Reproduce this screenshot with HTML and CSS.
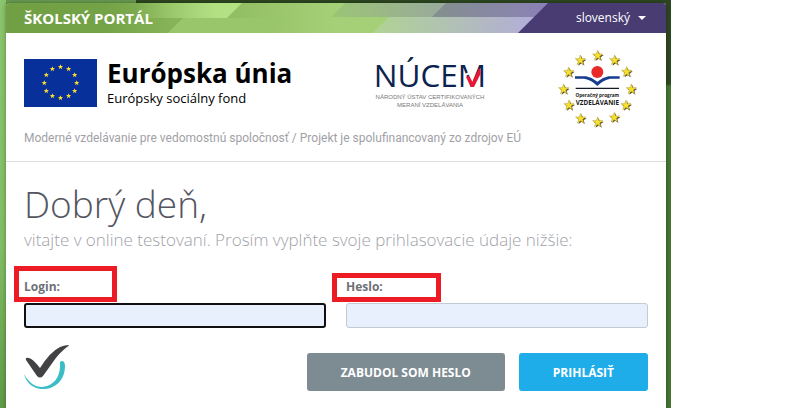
FILE: index.html
```html
<!DOCTYPE html>
<html lang="sk">
<head>
  <meta charset="UTF-8">
  <meta name="viewport" content="width=device-width, initial-scale=1.0">
  <title>Školský portál</title>
  <link rel="stylesheet" href="styles.css">
</head>
<body>
  <div class="page">
    <main class="panel">

      <!-- Top bar -->
      <header class="topbar">
        <svg class="topbar-art" viewBox="0 0 660 30" preserveAspectRatio="none" aria-hidden="true">
          <defs>
            <linearGradient id="base" gradientUnits="userSpaceOnUse" x1="0" y1="0" x2="330" y2="0">
              <stop offset="0" stop-color="#719f44"/>
              <stop offset=".3" stop-color="#74a247"/>
              <stop offset=".5" stop-color="#86b356"/>
              <stop offset="1" stop-color="#a6d078"/>
            </linearGradient>
            <linearGradient id="shine" gradientUnits="userSpaceOnUse" x1="130" y1="0" x2="210" y2="0">
              <stop offset="0" stop-color="#b2e083" stop-opacity="0"/>
              <stop offset="1" stop-color="#b2e083"/>
            </linearGradient>
            <linearGradient id="upper" gradientUnits="userSpaceOnUse" x1="320" y1="0" x2="545" y2="0">
              <stop offset="0" stop-color="#9bc673"/>
              <stop offset=".5" stop-color="#9aab9a"/>
              <stop offset="1" stop-color="#9186c0"/>
            </linearGradient>
            <linearGradient id="upper2" gradientUnits="userSpaceOnUse" x1="430" y1="0" x2="545" y2="0">
              <stop offset="0" stop-color="#838f8e"/>
              <stop offset="1" stop-color="#8b80b8"/>
            </linearGradient>
            <linearGradient id="lower" gradientUnits="userSpaceOnUse" x1="370" y1="0" x2="535" y2="0">
              <stop offset="0" stop-color="#afd394"/>
              <stop offset="1" stop-color="#b3abdc"/>
            </linearGradient>
          </defs>
          <rect width="660" height="30" fill="url(#base)"/>
          <path d="M130 0H236L221 15H130Z" fill="url(#shine)"/>
          <path d="M177 15H279L264 30H162Z" fill="#9ac66b"/>
          <path d="M339 0H560V14H325Z" fill="url(#upper)"/>
          <path d="M440 0H560V14H426Z" fill="url(#upper2)"/>
          <path d="M383 14H560V30H367Z" fill="url(#lower)"/>
          <path d="M542 0H660V30H512Z" fill="#483c73"/>
        </svg>
        <h1 class="portal-name">ŠKOLSKÝ PORTÁL</h1>
        <button class="language" type="button">slovenský <span class="caret"></span></button>
      </header>

      <!-- Partner logos -->
      <section class="partners">
        <div class="logos">
          <div class="eu">
            <svg class="eu-flag" viewBox="0 0 72 48" preserveAspectRatio="none" aria-hidden="true">
              <defs>
                <path id="star" d="M0-10 2.4-3.2 9.5-3.1 3.8 1.2 5.9 8.1 0 4-5.9 8.1-3.8 1.2-9.5-3.1-2.4-3.2Z"/>
                <g id="s"><use href="#star" transform="scale(.28)"/></g>
              </defs>
              <rect width="72" height="48" fill="#07309b"/>
              <g fill="#ffe02b">
                <use href="#s" x="36" y="8"/><use href="#s" x="44" y="10"/><use href="#s" x="50" y="16"/>
                <use href="#s" x="52" y="24"/><use href="#s" x="50" y="32"/><use href="#s" x="44" y="37"/>
                <use href="#s" x="36" y="39"/><use href="#s" x="28" y="37"/><use href="#s" x="22" y="32"/>
                <use href="#s" x="20" y="24"/><use href="#s" x="22" y="16"/><use href="#s" x="28" y="10"/>
              </g>
            </svg>
            <div>
              <p class="eu-title">Európska únia</p>
              <p class="eu-fund">Európsky sociálny fond</p>
            </div>
          </div>

          <svg class="nucem" viewBox="0 0 256 128" role="img" aria-label="NÚCEM">
            <text class="nucem-name" x="138" y="76">NÚCEM</text>
            <path d="M208 52 217 48" fill="none" stroke="#fff" stroke-width="4"/>
            <path d="M210 56 216 53 223 66 236 38 239 42V50L226 76H220Z" fill="#e8173a"/>
            <text class="nucem-sub" x="138" y="99">NÁRODNÝ ÚSTAV CERTIFIKOVANÝCH</text>
            <text class="nucem-sub" x="138" y="115">MERANÍ VZDELÁVANIA</text>
          </svg>

          <svg class="program" viewBox="0 0 240 240" role="img" aria-label="Operačný program Vzdelávanie">
            <defs>
              <g id="b">
                <use href="#star" transform="translate(3 3) scale(1.6)" fill="#55503a"/>
                <use href="#star" transform="scale(1.6)" fill="#f7e02e" stroke="#b39c2a" stroke-width="1"/>
              </g>
            </defs>
            <use href="#b" x="122" y="20"/><use href="#b" x="173" y="34"/><use href="#b" x="209" y="69"/>
            <use href="#b" x="223" y="121"/><use href="#b" x="207" y="169"/><use href="#b" x="172" y="206"/>
            <use href="#b" x="122" y="220"/><use href="#b" x="71" y="209"/><use href="#b" x="36" y="169"/>
            <use href="#b" x="20" y="121"/><use href="#b" x="35" y="70"/><use href="#b" x="70" y="34"/>
            <circle cx="121" cy="69" r="18" fill="#ea2a27"/>
            <path d="M54 82H87Q104 85 121 98Q138 85 155 82H188V89H160Q138 93 121 111Q104 93 82 89H54Z" fill="#173c8f"/>
            <path d="M56 116H186V120H56Z" fill="#151a24"/>
            <text class="program-small" x="121" y="143">Operačný program</text>
            <text class="program-big" x="121" y="169">VZDELÁVANIE</text>
          </svg>
        </div>
        <p class="tagline">Moderné vzdelávanie pre vedomostnú spoločnosť / Projekt je spolufinancovaný zo zdrojov EÚ</p>
      </section>

      <!-- Login -->
      <form class="login">
        <h2>Dobrý deň,</h2>
        <p class="intro">vitajte v online testovaní. Prosím vyplňte svoje prihlasovacie údaje nižšie:</p>

        <div class="fields">
          <div class="field">
            <label for="login">Login:</label>
            <input class="active" type="text" id="login" name="login">
            <span class="mark mark-login"></span>
          </div>
          <div class="field">
            <label for="heslo">Heslo:</label>
            <input type="password" id="heslo" name="heslo">
            <span class="mark mark-heslo"></span>
          </div>
        </div>

        <div class="actions">
          <svg class="check" viewBox="0 0 46 46" aria-hidden="true">
            <path d="M36 17C38 15 41 16 41 21C41 36 30 45 17 44C8 43 2 37 0 29C5 38 11 42 18 42C29 41 37 33 36 17Z" fill="#3abdc6"/>
            <path d="M2 15Q1 12 5 13Q8 13 16 23Q26 7 36 2Q41 0 45 0Q45 1 43 2Q35 8 29 17L19 31Q16 34 13 31Z" fill="#424143"/>
          </svg>
          <button class="btn btn-grey" type="button">ZABUDOL SOM HESLO</button>
          <button class="btn btn-blue" type="submit">PRIHLÁSIŤ</button>
        </div>
      </form>
    </main>
  </div>
</body>
</html>
```
FILE: styles.css
```css
/* ===== Reset ===== */
* {
  margin: 0;
  padding: 0;
  box-sizing: border-box;
}
body {
  background: #fff;
  font-family: "Open Sans", "Noto Sans", sans-serif;
  color: #6f7076;
}

/* ===== Page ===== */
.page {
  max-width: 671px;
  min-height: 100vh;
  padding: 3px 5px 0 6px;
  display: flex;
  background:
    linear-gradient(#8ac46d, #82bd64 60%, #5f9a46) 0 0 / 6px 100% no-repeat,
    linear-gradient(#6a9c50, #6a9c50) 0 0 / 136px 3px no-repeat,
    linear-gradient(#2d4720 0, #2d4a20 84px, #467634 86px, #467634 100%);
}
.panel {
  flex: 1;
  min-width: 0;
  background: #fff;
  border-radius: 3px 3px 0 0;
  box-shadow: 0 0 4px rgba(0,0,0,0.35);
}

/* ===== Top bar ===== */
.topbar {
  position: relative;
  display: flex;
  justify-content: space-between;
  align-items: center;
  height: 30px;
  padding: 0 20px 0 18px;
  border-radius: 3px 3px 0 0;
  overflow: hidden;
}
.topbar-art {
  position: absolute;
  inset: 0;
  width: 100%;
  height: 100%;
}
.portal-name {
  position: relative;
  font-size: 15px;
  line-height: 30px;
  color: #fff;
}
.language {
  position: relative;
  display: flex;
  align-items: center;
  gap: 8px;
  border: none;
  background: none;
  color: #fff;
  font: 12px/30px "Open Sans", sans-serif;
  cursor: pointer;
}
.caret {
  border: 4px solid transparent;
  border-top-color: #fff;
  border-bottom: none;
}

/* ===== Partner logos ===== */
.partners {
  padding: 16px 18px 14px;
  border-bottom: 1px solid #dcdcdc;
}
.logos {
  display: flex;
  justify-content: space-between;
  align-items: flex-start;
  padding-right: 11px;
}
.eu {
  display: flex;
  gap: 10px;
  padding-top: 10px;
  color: #000;
}
.eu-flag {
  width: 73px;
  height: 48px;
}
.eu-title {
  font-size: 26px;
  line-height: 28px;
  font-weight: bold;
}
.eu-fund {
  font-size: 13px;
  line-height: 22px;
}
.nucem {
  width: 128px;
  height: 64px;
}
.nucem-name {
  font-size: 63px;
  fill: #0c2350;
  text-anchor: middle;
}
.nucem-sub {
  font: 12px "Liberation Sans", sans-serif;
  fill: #777;
  text-anchor: middle;
}
.program {
  width: 80px;
  height: 80px;
}
.program-small,
.program-big {
  font: bold 14px "Open Sans", sans-serif;
  fill: #1b1b20;
  text-anchor: middle;
}
.program-big {
  font-size: 19px;
}
.tagline {
  font: 12px/18px Roboto, "Open Sans", sans-serif;
  color: #9fa1a6;
}

/* ===== Login ===== */
.login {
  padding: 18px;
}
.login h2 {
  font-size: 37px;
  line-height: 48px;
  font-weight: 300;
  color: #54555f;
}
.intro {
  font-size: 17px;
  line-height: 24px;
  font-weight: 300;
  color: #a0a2a8;
}
.fields {
  display: flex;
  gap: 20px;
  padding-top: 27px;
}
.field {
  position: relative;
  flex: 1;
}
.field label {
  display: block;
  font-size: 12px;
  line-height: 16px;
  padding-bottom: 8px;
  font-weight: bold;
}
.field input {
  display: block;
  width: 100%;
  height: 25px;
  padding: 0 6px;
  border: 1px solid #c2cbd1;
  border-radius: 3px;
  background: #e8f0fe;
}
.field input.active {
  border: 2px solid #101010;
}

/* red frames round the field names */
.mark {
  position: absolute;
  border: 5px solid #ed1c24;
  pointer-events: none;
}
.mark-login {
  top: -13px;
  left: -10px;
  width: 103px;
  height: 36px;
}
.mark-heslo {
  top: -6px;
  left: -14px;
  width: 109px;
  height: 29px;
}

/* ===== Buttons ===== */
.actions {
  display: flex;
  align-items: flex-end;
  gap: 14px;
  padding-top: 17px;
}
.check {
  width: 46px;
  height: 46px;
  margin-right: auto;
}
.btn {
  height: 38px;
  padding: 0 34px;
  border: none;
  border-radius: 3px;
  color: #fff;
  font: bold 12px "Open Sans", sans-serif;
  cursor: pointer;
}
.btn-grey {
  background: #7d8b93;
}
.btn-blue {
  background: #1eade8;
}
```
